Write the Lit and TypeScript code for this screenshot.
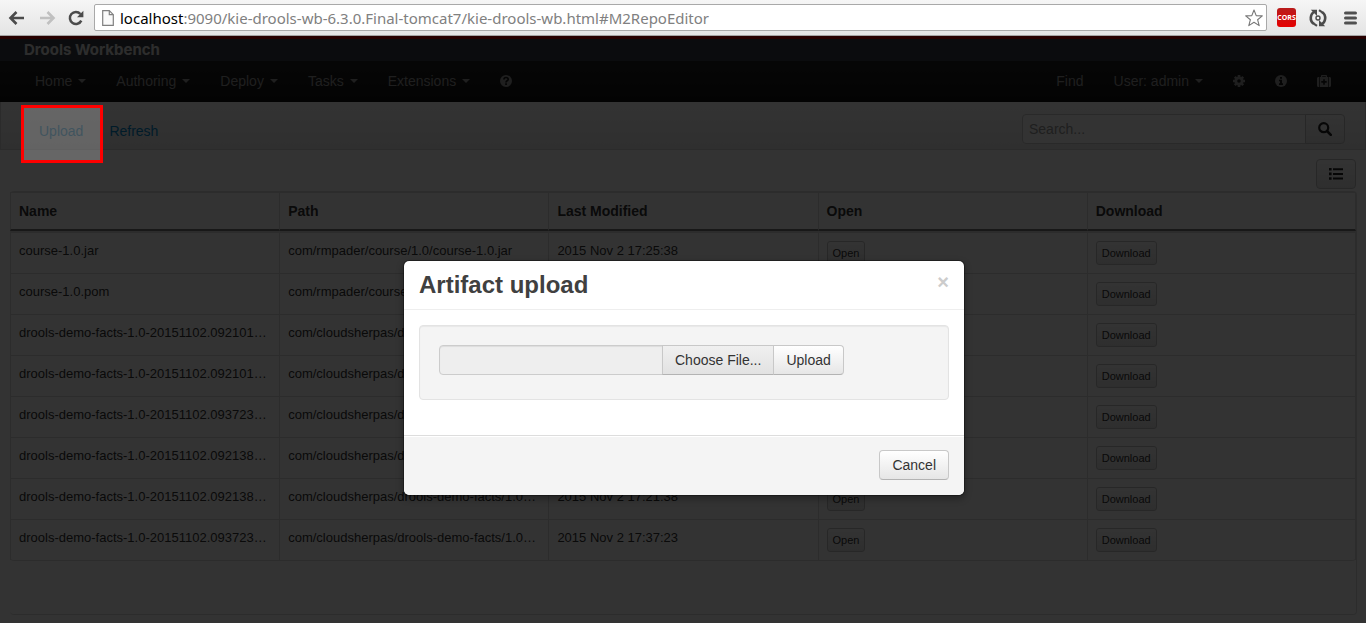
import { LitElement, html, css, svg } from "lit";
import { customElement } from "lit/decorators.js";

interface Artifact {
  name: string;
  path: string;
  modified: string;
}

const FACTS_PATH = "com/cloudsherpas/drools-demo-facts/1.0…";

const ARTIFACTS: Artifact[] = [
  { name: "course-1.0.jar", path: "com/rmpader/course/1.0/course-1.0.jar", modified: "2015 Nov 2 17:25:38" },
  { name: "course-1.0.pom", path: "com/rmpader/course/1.0/course-1.0.pom", modified: "2015 Nov 2 17:25:38" },
  { name: "drools-demo-facts-1.0-20151102.092101…", path: FACTS_PATH, modified: "2015 Nov 2 17:21:01" },
  { name: "drools-demo-facts-1.0-20151102.092101…", path: FACTS_PATH, modified: "2015 Nov 2 17:21:01" },
  { name: "drools-demo-facts-1.0-20151102.093723…", path: FACTS_PATH, modified: "2015 Nov 2 17:37:23" },
  { name: "drools-demo-facts-1.0-20151102.092138…", path: FACTS_PATH, modified: "2015 Nov 2 17:21:38" },
  { name: "drools-demo-facts-1.0-20151102.092138…", path: FACTS_PATH, modified: "2015 Nov 2 17:21:38" },
  { name: "drools-demo-facts-1.0-20151102.093723…", path: FACTS_PATH, modified: "2015 Nov 2 17:37:23" },
];

const MENUS = ["Home", "Authoring", "Deploy", "Tasks", "Extensions"];

const icon = (w: number, h: number, box: string, body: unknown) =>
  html`<svg width=${w} height=${h} viewBox=${box} aria-hidden="true">${body}</svg>`;

const backIcon = icon(18, 16, "0 0 18 16", svg`<path d="M8.500 2 2.500 8l6 6M3 8h13" fill="none" stroke="#4b4b4b" stroke-width="2.600"/>`);
const forwardIcon = icon(18, 16, "0 0 18 16", svg`<path d="M9.500 2l6 6-6 6M15 8H2" fill="none" stroke="#c0c0c0" stroke-width="2.600"/>`);
const reloadIcon = icon(16, 16, "0 0 16 16", svg`<path d="M13.300 10.600A6 6 0 1 1 12.400 4" fill="none" stroke="#4b4b4b" stroke-width="2.500"/><path d="M15.400.8v6.400H9z" fill="#4b4b4b"/>`);
const pageIcon = icon(12, 16, "0 0 12 16", svg`<path d="M.7.7h6.600l4 4v10.600H.7z" fill="#fafafa" stroke="#808080" stroke-width="1.200"/><path d="M7.300.7v4h4" fill="none" stroke="#808080" stroke-width="1.200"/>`);
const starIcon = icon(18, 18, "0 0 18 18", svg`<path d="M9 1l2.200 5.600 6.100.3-4.700 3.800 1.600 5.900L9 13.300l-5.200 3.300 1.600-5.900L.7 6.900l6.100-.3z" fill="#fff" stroke="#777" stroke-width="1.100" stroke-linejoin="round"/>`);
const syncIcon = icon(18, 18, "0 0 18 18", svg`<path d="M6 2.400A7.200 7.200 0 0 0 4.800 14.800M12 15.600A7.200 7.200 0 0 0 13.200 3.200" fill="none" stroke="#4b4b4b" stroke-width="2.600"/><path d="M1.800.8H8v6.200zM16.200 17.200H10V11z" fill="#4b4b4b"/><path d="M10 1.200l4 2.600M8 16.800l-4-2.600" stroke="#4b4b4b" stroke-width="2.200"/><circle cx="9" cy="9" r="2" fill="none" stroke="#4b4b4b" stroke-width="1.400"/>`);
const menuIcon = icon(13, 14, "0 0 13 14", svg`<path d="M1.500 2h10M1.500 7h10M1.500 12h10" fill="none" stroke="#505050" stroke-width="3" stroke-linecap="round"/>`);
const helpIcon = icon(12, 12, "0 0 12 12", svg`<circle cx="6" cy="6" r="6" fill="#999"/><path d="M3.900 4.600C3.900 3 5 2.500 6 2.500c1.200 0 2.200.8 2.200 1.900C8.200 5.900 6 5.700 6 7.400" fill="none" stroke="#151515" stroke-width="1.600"/><path d="M5.200 8.300h1.700v1.600H5.200z" fill="#151515"/>`);
const gearIcon = icon(12, 12, "0 0 12 12", svg`<circle cx="6" cy="6" r="3.200" fill="none" stroke="#999" stroke-width="2.800"/><path d="M6 0v2.200M6 9.800V12M0 6h2.200M9.800 6H12M1.800 1.800l1.500 1.500M8.700 8.700l1.500 1.500M10.200 1.800 8.700 3.300M3.300 8.700l-1.500 1.500" stroke="#999" stroke-width="2.600"/>`);
const infoIcon = icon(12, 12, "0 0 12 12", svg`<circle cx="6" cy="6" r="6" fill="#999"/><path d="M5 2h2v1.700H5zM4 4.700h3v3.600h1V10H4V8.300h1V6.200H4z" fill="#151515"/>`);
const medkitIcon = icon(14, 12, "0 0 14 12", svg`<path d="M0 3.500C0 2.700.6 2 1.400 2H2v10h-.6C.6 12 0 11.300 0 10.500zM12 2h.6c.8 0 1.400.7 1.400 1.500v7c0 .8-.6 1.500-1.400 1.500H12zM2.700 2H4V.8C4 .3 4.300 0 4.800 0h4.400c.5 0 .8.300.8.800V2h1.300v10H2.700zM5.200 2h3.600v-.8H5.200zM6.200 4.200v1.900H4.300v1.700h1.900v1.900h1.600V7.800h1.900V6.100H7.800V4.200z" fill="#999" fill-rule="evenodd"/>`);
const searchIcon = icon(14, 14, "0 0 14 14", svg`<circle cx="5.700" cy="5.700" r="4.500" fill="none" stroke="#222" stroke-width="2.200"/><path d="M9 9l3.800 3.800" stroke="#222" stroke-width="2.600" stroke-linecap="round"/>`);
const listIcon = icon(14, 12, "0 0 14 12", svg`<path d="M0 0h2.600v2.600H0zM4 .3h10v2H4zM0 4.600h2.600v2.600H0zM4 4.900h10v2H4zM0 9.200h2.600v2.600H0zM4 9.500h10v2H4z" fill="#222"/>`);

@customElement("browser-bar")
class BrowserBar extends LitElement {
  static styles = css`
    :host {
      display: flex;
      align-items: center;
      box-sizing: border-box;
      height: 36px;
      padding: 0 9px 0 8px;
      background: linear-gradient(#f6f6f6, #e4e4e4);
      border-bottom: 1px solid #a3a3a3;
    }
    svg { display: block; }
    button {
      padding: 0;
      border: 0;
      background: none;
    }
    .nav {
      display: flex;
      gap: 12px;
      margin-right: 10px;
    }
    .address {
      flex: 1;
      min-width: 0;
      display: flex;
      align-items: center;
      gap: 6px;
      box-sizing: border-box;
      height: 27px;
      padding: 0 3px 0 7px;
      border: 1px solid #a9a9a9;
      border-radius: 2px;
      background: #fff;
      font: 15px/24px "Noto Sans", sans-serif;
      color: #808080;
    }
    .url {
      flex: 1;
      overflow: hidden;
      white-space: nowrap;
    }
    .host { color: #000; }
    .tools {
      display: flex;
      align-items: center;
      gap: 13px;
      margin-left: 10px;
    }
    .cors {
      width: 19px;
      height: 19px;
      border-radius: 3px;
      background: linear-gradient(#b81c1c, #e60000);
      color: #fff;
      font: bold 7px/19px "Open Sans", sans-serif;
      text-align: center;
    }
    .menu { margin-left: 4px; }
  `;

  render() {
    return html`
      <div class="nav">
        <button aria-label="Back">${backIcon}</button>
        <button aria-label="Forward">${forwardIcon}</button>
        <button aria-label="Reload">${reloadIcon}</button>
      </div>
      <div class="address">
        ${pageIcon}
        <div class="url"><span class="host">localhost</span>:9090/kie-drools-wb-6.3.0.Final-tomcat7/kie-drools-wb.html#M2RepoEditor</div>
        <button aria-label="Bookmark">${starIcon}</button>
      </div>
      <div class="tools">
        <button class="cors">CORS</button>
        <button aria-label="Sync">${syncIcon}</button>
        <button class="menu" aria-label="Menu">${menuIcon}</button>
      </div>
    `;
  }
}

@customElement("upload-dialog")
class UploadDialog extends LitElement {
  static styles = css`
    :host {
      display: block;
      box-sizing: border-box;
      width: 562px;
      border: 1px solid rgba(0, 0, 0, 0.3);
      border-radius: 6px;
      background: #fff;
      background-clip: padding-box;
      box-shadow: 0 3px 7px rgba(0, 0, 0, 0.3);
      color: #333;
    }
    button {
      box-sizing: border-box;
      height: 30px;
      padding: 4px 12px;
      border: 1px solid #ccc;
      border-color: #c8c8c8 #c8c8c8 #b3b3b3;
      border-radius: 4px;
      background: linear-gradient(#fff, #e6e6e6);
      color: #333;
      font: 14px/20px "Liberation Sans", sans-serif;
      white-space: nowrap;
    }
    header {
      display: flex;
      justify-content: space-between;
      align-items: flex-start;
      padding: 9px 15px;
      border-bottom: 1px solid #eee;
    }
    h3 {
      margin: 0;
      font: bold 24px/30px "Liberation Sans", sans-serif;
      color: #404040;
    }
    header .close {
      height: 24px;
      padding: 0;
      border: 0;
      background: none;
      color: #ccc;
      font: bold 20px/24px "Liberation Sans", sans-serif;
    }
    .body { padding: 15px 15px 35px; }
    .well {
      display: flex;
      box-sizing: border-box;
      min-height: 75px;
      padding: 19px;
      border: 1px solid #e3e3e3;
      border-radius: 4px;
      background: #f4f4f4;
      box-shadow: inset 0 1px 1px rgba(0, 0, 0, 0.05);
    }
    .well input {
      box-sizing: border-box;
      width: 224px;
      height: 30px;
      border: 1px solid #ccc;
      border-radius: 4px 0 0 4px;
      background: #eee;
      box-shadow: inset 0 1px 1px rgba(0, 0, 0, 0.075);
    }
    .well button {
      margin-left: -1px;
      border-radius: 0;
    }
    .well .choose { background: linear-gradient(#f0f0f0, #e2e2e2); }
    .well .upload { border-radius: 0 4px 4px 0; }
    footer {
      display: flex;
      justify-content: flex-end;
      padding: 14px 15px 15px;
      border-top: 1px solid #ddd;
      border-radius: 0 0 6px 6px;
      background: #f4f4f4;
      box-shadow: inset 0 1px 0 #fff;
    }
  `;

  render() {
    return html`
      <header>
        <h3>Artifact upload</h3>
        <button class="close" aria-label="Close">×</button>
      </header>
      <div class="body">
        <div class="well">
          <input type="text" aria-label="Selected file" readonly />
          <button class="choose">Choose File...</button>
          <button class="upload">Upload</button>
        </div>
      </div>
      <footer><button>Cancel</button></footer>
    `;
  }
}

@customElement("app-root")
class AppRoot extends LitElement {
  static styles = css`
    :host {
      display: flex;
      flex-direction: column;
      min-height: 100vh;
      background: #fff;
      color: #333;
      font: 14px/20px "Liberation Sans", sans-serif;
    }
    svg { display: block; }
    a { text-decoration: none; }
    .workbench {
      position: relative;
      flex: 1;
      display: flex;
      flex-direction: column;
    }
    .brand {
      padding: 1px 24px;
      border-top: 3px solid #c00000;
      background: #393f45;
      color: #e0e0e0;
      font: bold 15px/20px Inter, sans-serif;
    }
    .menubar {
      display: flex;
      justify-content: space-between;
      padding: 0 20px;
      background: linear-gradient(#222, #111);
    }
    .menus { display: flex; }
    .menus a {
      display: flex;
      align-items: center;
      padding: 10px 15px 11px;
      color: #999;
      min-height: 20px;
    }
    .caret {
      margin-left: 6px;
      border: 4px solid transparent;
      border-top-color: #999;
      border-bottom: 0;
    }
    .toolbar {
      display: flex;
      justify-content: space-between;
      align-items: flex-start;
      padding: 12px 20px 5px 38px;
      border: 1px solid #d4d4d4;
      border-top: 0;
      background: linear-gradient(#fff, #eaeaea);
    }
    .actions {
      display: flex;
      gap: 26px;
      padding-top: 7px;
    }
    .actions a { color: #08c; }
    .search { display: flex; }
    .search input {
      box-sizing: border-box;
      width: 284px;
      height: 30px;
      padding: 4px 6px;
      border: 1px solid #ccc;
      border-radius: 4px 0 0 4px;
      background: #fff;
      font: 14px/20px "Liberation Sans", sans-serif;
    }
    .search input::placeholder { color: #999; }
    button {
      box-sizing: border-box;
      border: 1px solid #c4c4c4;
      border-radius: 4px;
      background: linear-gradient(#fff, #e6e6e6);
      color: #333;
      font: 14px/20px "Liberation Sans", sans-serif;
    }
    .icon-button {
      height: 30px;
      padding: 4px 12px;
    }
    .search .icon-button {
      margin-left: -1px;
      border-radius: 0 4px 4px 0;
    }
    .content {
      flex: 1;
      display: flex;
      flex-direction: column;
      gap: 2px;
      padding: 9px 9px 8px 10px;
    }
    .content .icon-button { align-self: flex-end; margin-right: 1px; }
    .frame {
      flex: 1;
      border: 1px solid #ddd;
      border-left: 0;
      border-radius: 4px;
    }
    table {
      width: 100%;
      table-layout: fixed;
      border-collapse: separate;
      border-spacing: 0;
      border-bottom: 1px solid #ddd;
      border-radius: 4px;
      font-size: 13px;
    }
    th {
      padding: 8px;
      border-top: 1px solid #ddd;
      border-bottom: 2px solid #777;
      border-left: 1px solid #ddd;
      text-align: left;
      font-size: 14px;
      line-height: 20px;
    }
    td {
      padding: 8px 8px 12px;
      border-top: 1px solid #ddd;
      border-left: 1px solid #ddd;
      line-height: 20px;
      vertical-align: top;
      white-space: nowrap;
    }
    td.action { padding-bottom: 8px; }
    tbody tr:first-child td { border-top-width: 2px; }
    th:last-child, td:last-child { border-right: 1px solid #ddd; }
    td button {
      display: block;
      height: 24px;
      padding: 2px 5px;
      border-radius: 3px;
      font-size: 11px;
      line-height: 18px;
    }
    .backdrop {
      position: absolute;
      inset: 0;
      padding-top: 224px;
      background: rgba(0, 0, 0, 0.8);
    }
    .backdrop upload-dialog { margin-left: calc(50% - 280px); }
    .highlight {
      position: absolute;
      left: 21px;
      top: 69px;
      box-sizing: border-box;
      width: 82px;
      height: 58px;
      border: 3px solid #f00;
      background: rgba(255, 255, 255, 0.25);
    }
  `;

  render() {
    return html`
      <browser-bar></browser-bar>
      <div class="workbench">
        <div class="brand">Drools Workbench</div>
        <nav class="menubar">
          <div class="menus">
            ${MENUS.map((m) => html`<a href="#">${m}<span class="caret"></span></a>`)}
            <a href="#" aria-label="Help">${helpIcon}</a>
          </div>
          <div class="menus">
            <a href="#">Find</a>
            <a href="#">User: admin<span class="caret"></span></a>
            <a href="#" aria-label="Settings">${gearIcon}</a>
            <a href="#" aria-label="About">${infoIcon}</a>
            <a href="#" aria-label="Toolkit">${medkitIcon}</a>
          </div>
        </nav>
        <div class="toolbar">
          <div class="actions">
            <a href="#">Upload</a>
            <a href="#">Refresh</a>
          </div>
          <div class="search">
            <input type="text" placeholder="Search..." aria-label="Search" />
            <button class="icon-button" aria-label="Run search">${searchIcon}</button>
          </div>
        </div>
        <main class="content">
          <button class="icon-button" aria-label="Columns">${listIcon}</button>
          <div class="frame">
            <table>
              <thead>
                <tr>
                  <th>Name</th>
                  <th>Path</th>
                  <th>Last Modified</th>
                  <th>Open</th>
                  <th>Download</th>
                </tr>
              </thead>
              <tbody>
                ${ARTIFACTS.map(
                  (a) => html`<tr>
                    <td>${a.name}</td>
                    <td>${a.path}</td>
                    <td>${a.modified}</td>
                    <td class="action"><button>Open</button></td>
                    <td class="action"><button>Download</button></td>
                  </tr>`
                )}
              </tbody>
            </table>
          </div>
        </main>
        <div class="backdrop">
          <upload-dialog role="dialog" aria-label="Artifact upload"></upload-dialog>
        </div>
        <div class="highlight"></div>
      </div>
    `;
  }
}
